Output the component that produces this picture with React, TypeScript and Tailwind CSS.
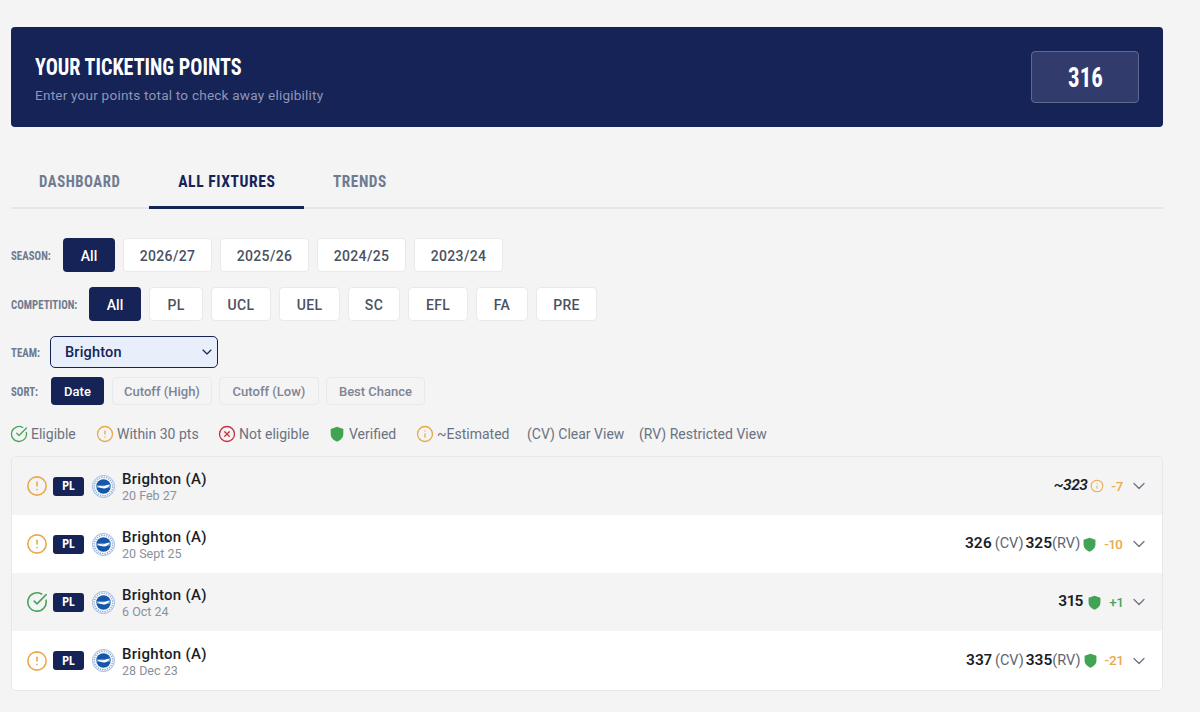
import { ChevronDown, CircleAlert, CircleCheckBig, CircleX, Info } from 'lucide-react';

const condensed = "font-['Roboto',sans-serif] [font-stretch:75%]";

const seasons = ['2026/27', '2025/26', '2024/25', '2023/24'];
const comps = [
  { name: 'PL', width: 'w-[54px]' },
  { name: 'UCL', width: 'w-[60px]' },
  { name: 'UEL', width: 'w-[61px]' },
  { name: 'SC', width: 'w-[52px]' },
  { name: 'EFL', width: 'w-[60px]' },
  { name: 'FA', width: 'w-[52px]' },
  { name: 'PRE', width: 'w-[61px]' },
];
const sorts = [
  { name: 'Cutoff (High)', width: 'w-[100px] ml-[1px]' },
  { name: 'Cutoff (Low)', width: 'w-[100px]' },
  { name: 'Best Chance', width: 'w-[99px]' },
];

function Shield({ size = 15 }: { size?: number }) {
  return (
    <svg width={size} height={size} viewBox="0 0 24 24" fill="#43a355" className="shrink-0">
      <path d="M12 1 L21.5 4.5 V12 C21.5 18 17 21.5 12 23.5 C7 21.5 2.5 18 2.5 12 V4.5 Z" />
    </svg>
  );
}

function Crest() {
  return (
    <svg width="23" height="23" viewBox="0 0 24 24" className="shrink-0">
      <circle cx="12" cy="12" r="11.5" fill="#fff" stroke="#9db4d6" strokeWidth="1" />
      <circle cx="12" cy="12" r="9.6" fill="none" stroke="#8fb0dc" strokeWidth="1.6" strokeDasharray="1.5 1" />
      <circle cx="12" cy="12" r="7.6" fill="#1557a8" />
      <path d="M4.6 10.6 H19.4 V13.4 H4.6 Z" fill="#fff" opacity="0.4" />
      <path d="M5.6 12.2 C8.5 10.6 10 12.4 12 11.8 C14 11.2 16 10 19 9.8 C17 12 15.6 14 12.6 14 C10 14 8 12.6 5.6 12.2 Z" fill="#fff" />
    </svg>
  );
}

function Pill({ label, active, width }: { label: string; active?: boolean; width: string }) {
  return (
    <button
      className={
        active
          ? `${width} h-[34px] pt-[2px] rounded-[4px] bg-[#152357] text-white text-[14px] font-medium`
          : `${width} h-[34px] pt-[2px] rounded-[4px] bg-white border border-[#e8e9ec] text-[#4b5160] text-[14px] font-medium tracking-[0.35px]`
      }
    >
      {label}
    </button>
  );
}

function Label({ children, className }: { children: string; className: string }) {
  return (
    <span className={`${condensed} ${className} pt-[3px] text-[12.5px] font-bold text-[#6f7b90] shrink-0 whitespace-nowrap`}>
      <span className="inline-block origin-left scale-x-[0.87]">{children}</span>
    </span>
  );
}

function LegendItem({ icon, text, width }: { icon?: React.ReactNode; text: string; width: string }) {
  return (
    <div className={`${width} flex items-center gap-[5px] shrink-0`}>
      {icon && <span className="w-[15px] h-[15px] flex items-center justify-center">{icon}</span>}
      <span className="text-[14px] text-[#6b7280] whitespace-nowrap">{text}</span>
    </div>
  );
}

interface Fixture {
  date: string;
  status: 'warn' | 'ok';
  diff: string;
  cv?: string;
  rv?: string;
  single?: string;
  estimated?: boolean;
}

const fixtures: Fixture[] = [
  { date: '20 Feb 27', status: 'warn', diff: '-7', single: '~323', estimated: true },
  { date: '20 Sept 25', status: 'warn', diff: '-10', cv: '326', rv: '325' },
  { date: '6 Oct 24', status: 'ok', diff: '+1', single: '315' },
  { date: '28 Dec 23', status: 'warn', diff: '-21', cv: '337', rv: '335' },
];

function FixtureRow({ fixture, shaded }: { fixture: Fixture; shaded: boolean }) {
  return (
    <div className={`h-[58px] last:h-[59px] flex items-center pl-[14px] pr-[13px] ${shaded ? 'bg-[#f4f4f5]' : 'bg-white'}`}>
      {fixture.status === 'ok' ? (
        <CircleCheckBig size={22} strokeWidth={1.75} className="text-[#4ba35c] shrink-0" />
      ) : (
        <CircleAlert size={22} strokeWidth={1.75} className="text-[#e9a94b] shrink-0" />
      )}
      <span className={`${condensed} ml-[5px] w-[31px] h-[19px] rounded-[3px] bg-[#152357] text-white text-[12px] font-bold flex items-center justify-center`}>
        PL
      </span>
      <span className="ml-[8px] flex"><Crest /></span>
      <div className="ml-[7px] pt-[1px]">
        <div className="text-[15px] leading-[18px] font-medium text-[#1a1d26] tracking-[0.3px]">Brighton (A)</div>
        <div className="text-[12.5px] leading-[15px] text-[#8b909a]">{fixture.date}</div>
      </div>
      <div className="ml-auto flex items-center text-[15.5px] proportional-nums">
        {fixture.single && (
          <span className={`font-semibold text-[#1a1d26] ${fixture.estimated ? 'italic tracking-[-0.5px]' : ''}`}>{fixture.single}</span>
        )}
        {fixture.cv && (
          <>
            <span className="font-semibold text-[#1a1d26]">{fixture.cv}</span>
            <span className="ml-[3px] text-[#5f6570] text-[14.5px]">(CV)</span>
            <span className="ml-[2px] font-semibold text-[#1a1d26]">{fixture.rv}</span>
            <span className="text-[#5f6570] text-[14.5px]">(RV)</span>
          </>
        )}
        <span className={`flex ${fixture.single && !fixture.estimated ? 'ml-[4px]' : fixture.estimated ? 'ml-[3px]' : 'ml-[2px]'}`}>
          {fixture.estimated ? <Info size={14} strokeWidth={1.75} className="text-[#e9a94b]" /> : <Shield />}
        </span>
        <span className={`ml-[7px] text-[13.5px] font-medium ${fixture.diff.startsWith('+') ? 'text-[#4ba35c]' : 'text-[#e9a94b]'}`}>
          {fixture.diff}
        </span>
        <ChevronDown size={20} strokeWidth={1.5} className="ml-[6px] text-[#6b7280]" />
      </div>
    </div>
  );
}

export default function App() {
  return (
    <div className="min-h-[712px] bg-[#f4f4f5] pl-[11px] pt-[27px] font-['Roboto',sans-serif]">
      <div className="w-[1152px]">
        {/* Points header */}
        <div className="h-[100px] rounded-[4px] bg-[#152357] flex items-center justify-between pl-[24px] pr-[24px]">
          <div className="pt-[3px]">
            <h1 className={`${condensed} text-[24px] leading-[28px] font-bold text-white whitespace-nowrap`}>
              <span className="inline-block origin-left scale-x-[0.84]">YOUR TICKETING POINTS</span>
            </h1>
            <p className="mt-[5px] text-[13.6px] leading-[18px] text-[#8e96b4] tracking-[0.2px]">Enter your points total to check away eligibility</p>
          </div>
          <div className={`${condensed} w-[108px] h-[52px] pt-[3px] rounded-[4px] bg-[#323c6c] border border-[#5e678d] flex items-center justify-center text-[27px] font-bold text-white`}>
            <span className="inline-block scale-x-[0.85]">316</span>
          </div>
        </div>

        {/* Tabs */}
        <div className={`${condensed} mt-[34px] h-[48px] border-b-2 border-[#e4e6ec] flex items-start text-[17px] font-bold tracking-[0.6px]`}>
          <div className="h-[48px] pb-[7px] w-[138px] flex items-center justify-center text-[#6f7b90]">
            <span className="inline-block scale-x-[0.87]">DASHBOARD</span>
          </div>
          <div className="h-[48px] pb-[4px] w-[155px] flex items-center justify-center text-[#152357] border-b-[3px] border-[#152357]">
            <span className="inline-block scale-x-[0.92]">ALL FIXTURES</span>
          </div>
          <div className="h-[48px] pb-[7px] w-[111px] flex items-center justify-center text-[#6f7b90]">
            <span className="inline-block scale-x-[0.9]">TRENDS</span>
          </div>
        </div>

        {/* Filters */}
        <div className="mt-[29px] flex items-center gap-[8px]">
          <Label className="w-[44px]">SEASON:</Label>
          <Pill label="All" active width="w-[52px]" />
          {seasons.map(s => <Pill key={s} label={s} width="w-[89px]" />)}
        </div>
        <div className="mt-[15px] flex items-center gap-[8px]">
          <Label className="w-[70px]">COMPETITION:</Label>
          <Pill label="All" active width="w-[52px]" />
          {comps.map(c => <Pill key={c.name} label={c.name} width={c.width} />)}
        </div>
        <div className="mt-[15px] flex items-center gap-[10px]">
          <Label className="w-[29px]">TEAM:</Label>
          <div className="w-[168px] h-[32px] rounded-[5px] bg-[#e8effb] border-[1.5px] border-[#152357] flex items-center justify-between pl-[14px] pr-[2px]">
            <span className="pt-[2px] text-[14.5px] font-medium text-[#152357] tracking-[0.2px]">Brighton</span>
            <ChevronDown size={16} strokeWidth={1.75} className="text-[#152357]" />
          </div>
        </div>
        <div className="mt-[9px] flex items-center gap-[7px]">
          <Label className="w-[33px]">SORT:</Label>
          <button className="h-[28px] w-[53px] pt-[1px] rounded-[4px] bg-[#152357] text-white text-[13px] font-medium">Date</button>
          {sorts.map(s => (
            <button key={s.name} className={`${s.width} h-[28px] pt-[1px] rounded-[4px] bg-[#f4f4f5] border border-[#e8e9ec] text-[#7d8494] text-[13px] font-medium`}>
              {s.name}
            </button>
          ))}
        </div>

        {/* Legend */}
        <div className="mt-[19px] h-[20px] flex items-center">
          <LegendItem width="w-[86px]" icon={<CircleCheckBig size={18} strokeWidth={1.75} className="text-[#4ba35c] shrink-0" />} text="Eligible" />
          <LegendItem width="w-[122px]" icon={<CircleAlert size={18} strokeWidth={1.75} className="text-[#e9a94b] shrink-0" />} text="Within 30 pts" />
          <LegendItem width="w-[110px]" icon={<CircleX size={18} strokeWidth={1.75} className="text-[#c8313f] shrink-0" />} text="Not eligible" />
          <LegendItem width="w-[88px]" icon={<Shield size={16} />} text="Verified" />
          <LegendItem width="w-[110px]" icon={<Info size={18} strokeWidth={1.75} className="text-[#e9a94b] shrink-0" />} text="~Estimated" />
          <LegendItem width="w-[112px]" text="(CV) Clear View" />
          <LegendItem width="w-[130px]" text="(RV) Restricted View" />
        </div>

        {/* Fixture list */}
        <div className="mt-[12px] rounded-[5px] border border-[#e6e7ea] overflow-hidden">
          {fixtures.map((f, i) => <FixtureRow key={f.date} fixture={f} shaded={i % 2 === 0} />)}
        </div>
      </div>
    </div>
  );
}
